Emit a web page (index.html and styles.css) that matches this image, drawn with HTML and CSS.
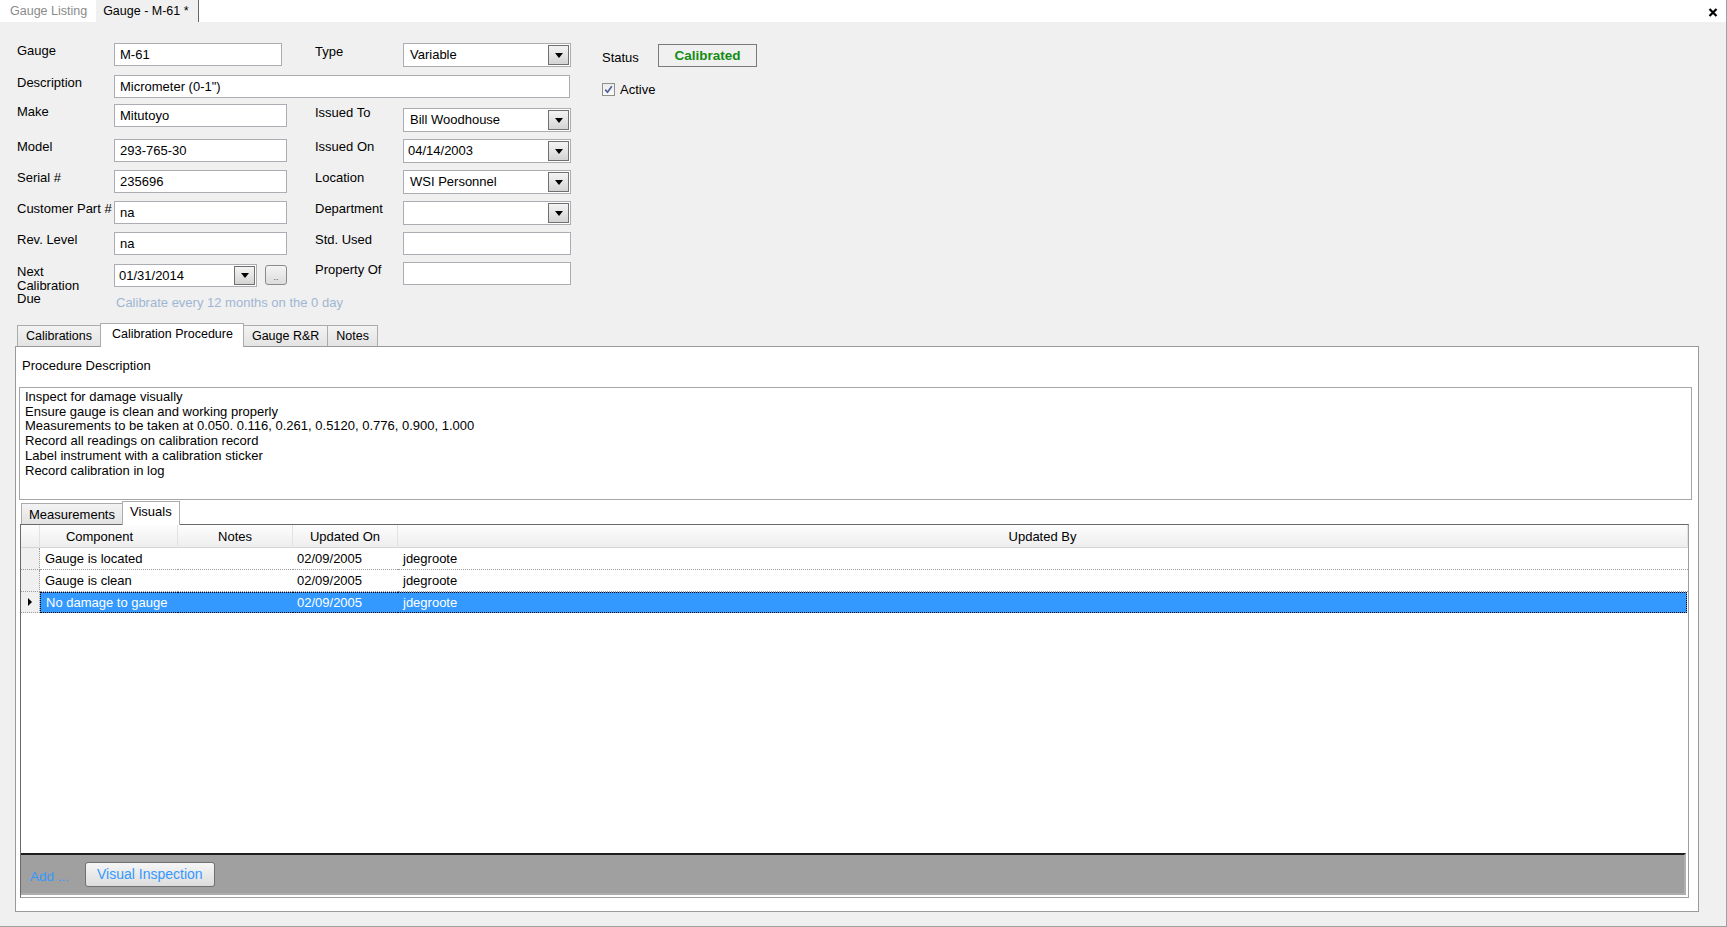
FILE: index.html
```html
<!DOCTYPE html>
<html lang="en">
<head>
  <meta charset="UTF-8" />
  <meta name="viewport" content="width=device-width, initial-scale=1.0" />
  <title>Gauge - M-61</title>
  <link rel="stylesheet" href="styles.css">
</head>
<body>
  <div class="window">
    <div class="doc-tabs">
      <div class="doc-tab">Gauge Listing</div>
      <div class="doc-tab active">Gauge - M-61 *</div>
      <div class="doc-close">
        <svg width="10" height="9" viewBox="0 0 10 9"><path d="M1.5 1 L8.5 8 M8.5 1 L1.5 8" stroke="#000" stroke-width="2.2" fill="none"/></svg>
      </div>
    </div>

    <div class="gauge-form">
      <!-- row 1 -->
      <div class="lbl c1">Gauge</div>
      <div class="tb c2 short">M-61</div>
      <div class="lbl c3 mid">Type</div>
      <div class="combo c4"><span class="combo-text">Variable</span><span class="combo-btn"><i></i></span></div>
      <div class="lbl c6 status-lbl">Status</div>
      <div class="status-box c7">Calibrated</div>

      <!-- row 2 -->
      <div class="lbl c1">Description</div>
      <div class="tb wide">Micrometer (0-1")</div>
      <div class="check-row c67">
        <span class="checkbox">
          <svg width="9" height="9" viewBox="0 0 9 9"><path d="M1.2 4.6 L3.5 7.2 L7.8 1.2" stroke="#4c5f99" stroke-width="1.6" fill="none"/></svg>
        </span>
        Active
      </div>

      <!-- row 3 -->
      <div class="lbl c1">Make</div>
      <div class="tb c2">Mitutoyo</div>
      <div class="lbl c3 mid down">Issued To</div>
      <div class="combo c4 down"><span class="combo-text">Bill Woodhouse</span><span class="combo-btn"><i></i></span></div>

      <!-- row 4 -->
      <div class="lbl c1">Model</div>
      <div class="tb c2">293-765-30</div>
      <div class="lbl c3">Issued On</div>
      <div class="combo c4"><span class="combo-text date">04/14/2003</span><span class="combo-btn"><i></i></span></div>

      <!-- row 5 -->
      <div class="lbl c1">Serial #</div>
      <div class="tb c2">235696</div>
      <div class="lbl c3">Location</div>
      <div class="combo c4"><span class="combo-text">WSI Personnel</span><span class="combo-btn"><i></i></span></div>

      <!-- row 6 -->
      <div class="lbl c1">Customer Part #</div>
      <div class="tb c2">na</div>
      <div class="lbl c3">Department</div>
      <div class="combo c4"><span class="combo-text"></span><span class="combo-btn"><i></i></span></div>

      <!-- row 7 -->
      <div class="lbl c1">Rev. Level</div>
      <div class="tb c2">na</div>
      <div class="lbl c3">Std. Used</div>
      <div class="tb c4 plain"></div>

      <!-- row 8 -->
      <div class="lbl c1 multi">Next<br>Calibration<br>Due</div>
      <div class="date-row c2">
        <div class="combo date-pick"><span class="combo-text date">01/31/2014</span><span class="combo-btn"><i></i></span></div>
        <span class="dots-btn">..</span>
      </div>
      <div class="lbl c3 up">Property Of</div>
      <div class="tb c4 plain up"></div>

      <!-- row 9 -->
      <div class="hint">Calibrate every 12 months on the 0 day</div>
    </div>

    <div class="tabs">
      <div class="tab-strip">
        <div class="tab">Calibrations</div>
        <div class="tab selected">Calibration Procedure</div>
        <div class="tab">Gauge R&amp;R</div>
        <div class="tab">Notes</div>
      </div>
      <div class="tab-panel">
        <div class="proc-label">Procedure Description</div>
        <div class="proc-text">Inspect for damage visually
Ensure gauge is clean and working properly
Measurements to be taken at 0.050. 0.116, 0.261, 0.5120, 0.776, 0.900, 1.000
Record all readings on calibration record
Label instrument with a calibration sticker
Record calibration in log</div>

        <div class="sub-tabs">
          <div class="tab-strip sub">
            <div class="tab">Measurements</div>
            <div class="tab selected">Visuals</div>
          </div>
          <div class="grid">
            <div class="grid-row head">
              <span class="rh"></span>
              <span class="col-comp">Component</span>
              <span>Notes</span>
              <span>Updated On</span>
              <span>Updated By</span>
            </div>
            <div class="grid-row">
              <span class="rh"></span>
              <span>Gauge is located</span>
              <span></span>
              <span>02/09/2005</span>
              <span>jdegroote</span>
            </div>
            <div class="grid-row">
              <span class="rh"></span>
              <span>Gauge is clean</span>
              <span></span>
              <span>02/09/2005</span>
              <span>jdegroote</span>
            </div>
            <div class="grid-row current">
              <span class="rh"><i class="row-arrow"></i></span>
              <span class="sel">No damage to gauge</span>
              <span class="sel"></span>
              <span class="sel">02/09/2005</span>
              <span class="sel">jdegroote</span>
            </div>
            <div class="grid-empty"></div>
            <div class="grid-footer">
              <span class="add-link">Add ...</span>
              <span class="footer-btn">Visual Inspection</span>
            </div>
          </div>
        </div>
      </div>
    </div>
  </div>
</body>
</html>
```

FILE: styles.css
```css
* {
  box-sizing: border-box;
}
body {
  margin: 0;
  background: #f0f0f0;
  color: #000;
  font-family: "Liberation Sans", Arial, sans-serif;
  font-size: 13px;
  overflow: hidden;
}
.window {
  height: 927px;
  border-right: 1px solid #a0a0a0;
  border-bottom: 1px solid #a0a0a0;
}

/* document tabs */
.doc-tabs {
  display: flex;
  height: 22px;
  background: #fff;
  font-size: 12.5px;
}
.doc-tab {
  padding: 0 9px 0 10px;
  line-height: 22px;
  color: #8a8a8a;
}
.doc-tab.active {
  padding-left: 7px;
  background: #f0f0f0;
  color: #000;
  border-right: 1px solid #666;
}
.doc-close {
  margin-left: auto;
  padding: 6px 8px 0 0;
}

/* gauge header form */
.gauge-form {
  display: grid;
  grid-template-columns: 97px 201px 88px 168px 31px 56px 99px;
  grid-template-rows: 32px 29px 35px 31px 31px 31px 32px 31px 15px;
  padding: 21px 0 0 17px;
}
.c1 { grid-column: 1; }
.c2 { grid-column: 2; }
.c3 { grid-column: 3; }
.c4 { grid-column: 4; }
.c6 { grid-column: 6; }
.c67 { grid-column: 6 / 8; }
.c7 { grid-column: 7; }
.lbl {
  line-height: 16px;
  white-space: nowrap;
}
.lbl.mid {
  margin-top: 1px;
}
.lbl.multi {
  line-height: 13.5px;
  margin-top: 1px;
}
.down {
  margin-top: 4px;
}
.up {
  margin-top: -2px;
}
.tb {
  width: 173px;
  height: 23px;
  padding: 0 5px;
  border: 1px solid #abadb3;
  background: #fff;
  line-height: 21px;
}
.tb.short {
  width: 168px;
}
.tb.plain {
  width: 168px;
}
.tb.wide {
  grid-column: 2 / 5;
  width: 456px;
}
.combo {
  display: flex;
  width: 168px;
  height: 24px;
  border: 1px solid #abadb3;
  background: #fff;
}
.combo-text {
  flex: 1;
  padding-left: 6px;
  line-height: 22px;
  white-space: nowrap;
}
.combo-text.date {
  padding-left: 4px;
}
.combo-btn {
  display: flex;
  align-items: center;
  justify-content: center;
  width: 21px;
  margin: 1px;
  border: 1px solid #707070;
  background: linear-gradient(#f4f4f4, #d4d4d4);
}
.combo-btn i {
  border-left: 4px solid transparent;
  border-right: 4px solid transparent;
  border-top: 5px solid #000;
}
.status-lbl {
  margin-top: 7px;
}
.status-box {
  width: 99px;
  height: 23px;
  margin-top: 1px;
  border: 1px solid #7a7a7a;
  color: #148c14;
  font-size: 13.5px;
  font-weight: bold;
  line-height: 21px;
  text-align: center;
}
.check-row {
  display: flex;
  align-items: center;
  gap: 5px;
  margin-top: 7px;
  height: 15px;
}
.checkbox {
  display: flex;
  align-items: center;
  justify-content: center;
  width: 13px;
  height: 13px;
  border: 1px solid #8e8f8f;
  background: linear-gradient(#ececec, #fafafa);
}
.date-row {
  display: flex;
  align-items: flex-start;
  gap: 8px;
}
.combo.date-pick {
  width: 143px;
  height: 23px;
}
.dots-btn {
  width: 22px;
  height: 20px;
  margin-top: 1px;
  border: 1px solid #8a8a8a;
  border-radius: 3px;
  background: linear-gradient(#f4f4f4, #dcdcdc);
  color: #555;
  font-size: 9px;
  line-height: 22px;
  text-align: center;
}
.hint {
  grid-column: 2 / 5;
  padding-left: 2px;
  color: #9fb6d3;
  line-height: 15px;
  white-space: nowrap;
}

/* tab controls */
.tabs {
  margin: 13px 27px 0 15px;
}
.tab-strip {
  display: flex;
  align-items: flex-end;
  height: 23px;
  padding-left: 2px;
  position: relative;
  z-index: 1;
  font-size: 12.5px;
}
.tab {
  height: 21px;
  margin-right: -1px;
  padding: 0 8px;
  border: 1px solid #acacac;
  border-bottom: none;
  background: linear-gradient(#f3f3f3, #e3e3e3);
  line-height: 21px;
  white-space: nowrap;
}
.tab.selected {
  height: 24px;
  margin-bottom: -1px;
  padding: 0 10px 0 11px;
  background: #fff;
  line-height: 20px;
  position: relative;
}
.tab-panel {
  height: 566px;
  padding: 11px 6px 13px 3px;
  border: 1px solid #9a9a9a;
  background: #fff;
}
.proc-label {
  padding-left: 3px;
  line-height: 16px;
}
.proc-text {
  height: 113px;
  margin-top: 13px;
  padding: 2px 5px;
  border: 1px solid #a6a6a6;
  line-height: 14.7px;
  white-space: pre;
}
.sub-tabs {
  margin: 1px 3px 0 1px;
}
.tab-strip.sub {
  padding-left: 1px;
  font-size: 13px;
}
.tab-strip.sub .tab {
  padding: 0 7px;
}
.tab-strip.sub .tab.selected {
  padding: 0 7px;
}

/* data grid */
.grid {
  display: flex;
  flex-direction: column;
  height: 374px;
  border: 1px solid;
  border-color: #6a6a6a #a0a0a0 #a0a0a0 #6a6a6a;
  background: #fff;
}
.grid-row {
  display: grid;
  grid-template-columns: 19px 138px 115px 105px 1fr;
  height: 22px;
}
.grid-row span {
  padding-left: 5px;
  line-height: 21px;
  border-bottom: 1px dotted #9a9a9a;
  white-space: nowrap;
}
.grid-row span:nth-child(4) {
  padding-left: 4px;
}
.grid-row .rh {
  padding: 0;
  background: #f0f0f0;
  border-right: 1px dotted #9a9a9a;
}
.grid-row.head {
  height: 23px;
  background: linear-gradient(#fdfdfd, #eeeeee);
  border-bottom: 1px solid #d5d5d5;
}
.grid-row.head span {
  padding: 0;
  border-bottom: none;
  border-right: 1px solid #e2e2e2;
  text-align: center;
  line-height: 23px;
}
.grid-row.head .col-comp {
  padding-right: 18px;
}
.grid-row.head .rh {
  background: none;
}
.grid-row.current {
  height: 21px;
}
.grid-row .sel {
  background: #3399ff;
  color: #fff;
  border-top: 1px dotted #000;
  border-bottom: 1px dotted #000;
  line-height: 19px;
}
.grid-row .sel:last-child {
  border-right: 1px dotted #000;
  margin-right: 1px;
}
.grid-row .sel:nth-child(2) {
  border-left: 1px dotted #000;
}
.row-arrow {
  display: block;
  width: 0;
  height: 0;
  margin: 6px 0 0 7px;
  border-top: 4px solid transparent;
  border-bottom: 4px solid transparent;
  border-left: 4px solid #000;
}
.grid-empty {
  flex: 1;
}
.grid-footer {
  display: flex;
  align-items: center;
  height: 42px;
  margin: 0 2px 2px 0;
  padding-left: 9px;
  background: #a0a0a0;
  border-top: 2px solid #1e1e1e;
  border-right: 2px solid #b0b0b0;
  border-bottom: 2px solid #acacac;
}
.add-link {
  margin-top: 4px;
  color: #3399ff;
  font-size: 13.5px;
}
.footer-btn {
  height: 25px;
  margin-left: 16px;
  padding: 0 11px;
  border: 1px solid #707070;
  border-radius: 3px;
  background: linear-gradient(#f6f6f6, #dcdcdc);
  color: #3399ff;
  font-size: 14px;
  line-height: 23px;
}
```
